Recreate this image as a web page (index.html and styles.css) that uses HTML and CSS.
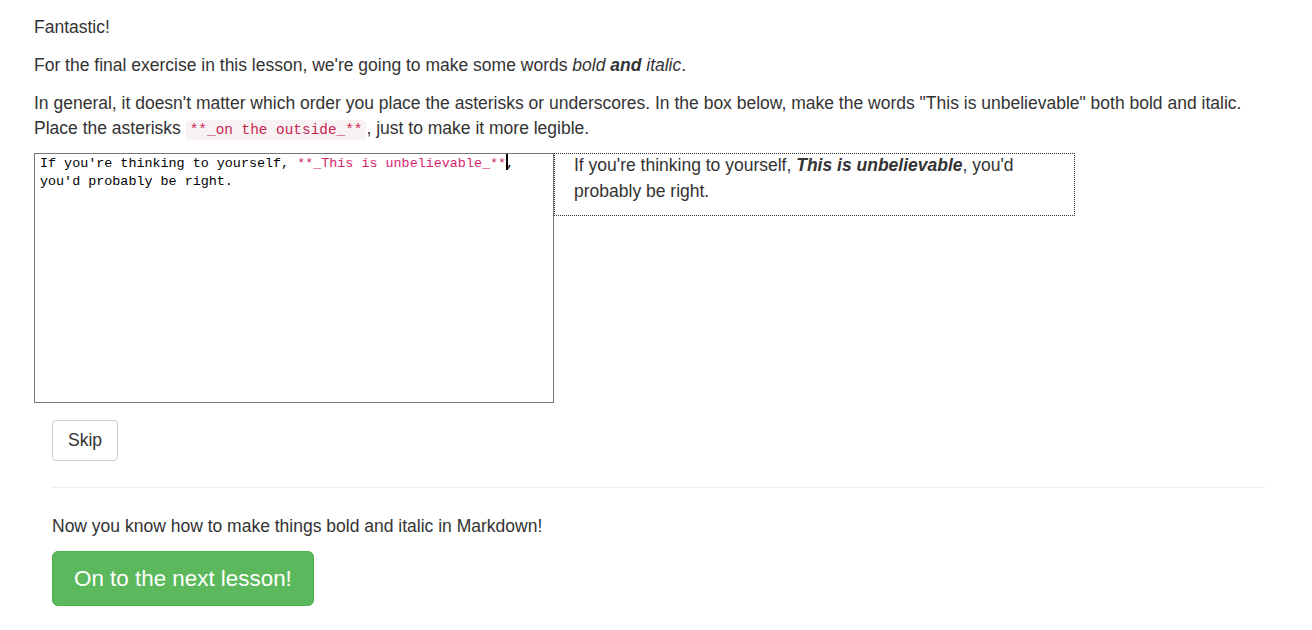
FILE: index.html
```html
<!DOCTYPE html>
<html>
<head>
<meta charset="utf-8">
<link rel="stylesheet" href="styles.css">
</head>
<body>
<main class="lesson">
  <p>Fantastic!</p>
  <p>For the final exercise in this lesson, we're going to make some words <em>bold <strong>and</strong> italic</em>.</p>
  <p class="instructions">In general, it doesn't matter which order you place the asterisks or underscores. In the box below, make the words "This is unbelievable" both bold and italic. Place the asterisks <code>**_on the outside_**</code>, just to make it more legible.</p>
  <div class="exercise">
    <div class="editor">If you're thinking to yourself, <span class="md">**_This is unbelievable_**</span><span class="caret"></span>, you'd probably be right.</div>
    <div class="preview"><p>If you're thinking to yourself, <strong><em>This is unbelievable</em></strong>, you'd probably be right.</p></div>
  </div>
  <div class="footer">
    <button class="btn btn-default">Skip</button>
    <hr class="divider">
    <p class="done">Now you know how to make things bold and italic in Markdown!</p>
    <button class="btn btn-success">On to the next lesson!</button>
  </div>
</main>
</body>
</html>
```

FILE: styles.css
```css
html, body {
  margin: 0;
  padding: 0;
  background: #fff;
}
body {
  font-family: "Liberation Sans", Arial, sans-serif;
  font-size: 17.5px;
  line-height: 25px;
  color: #333;
}
.lesson {
  padding: 15px 47px 0 34px;
}
p {
  margin: 0 0 13px;
}
.instructions {
  margin-bottom: 12px;
}
code {
  font-family: "Liberation Mono", monospace;
  font-size: 14.4px;
  line-height: 1;
  color: #c7254e;
  background: #f9f2f4;
  padding: 2px 4px;
  border-radius: 4px;
}
.exercise {
  display: flex;
  align-items: flex-start;
}
.editor {
  box-sizing: border-box;
  width: 520px;
  height: 250px;
  border: 1px solid #767676;
  padding: 0 5px;
  font-family: "Liberation Mono", monospace;
  font-size: 13.4px;
  line-height: 18px;
  color: #000;
  white-space: pre-wrap;
  word-wrap: break-word;
}
.md {
  color: #d6246e;
}
.caret {
  display: inline-block;
  width: 2px;
  height: 16px;
  background: #000;
  vertical-align: -3px;
  margin-right: -2px;
}
.preview {
  box-sizing: border-box;
  width: 521px;
  border: 1px dotted #333;
  padding: 0 20px 0 19px;
  line-height: 26px;
}
.preview p {
  margin: -2px 0 11px;
}
.footer {
  margin: 17px 0 0 18px;
}
.btn {
  display: inline-block;
  font-family: "Liberation Sans", Arial, sans-serif;
  font-size: 17.5px;
  line-height: 23px;
  padding: 8px 15px;
  border: 1px solid #ccc;
  border-radius: 4px;
  background: #fff;
  color: #333;
  cursor: pointer;
}
.divider {
  border: 0;
  border-top: 1px solid #eee;
  margin: 26px 0 26px;
}
.done {
  margin-bottom: 12px;
}
.btn-success {
  background: #5cb85c;
  border-color: #4cae4c;
  color: #fff;
  font-size: 22.4px;
  line-height: 31px;
  padding: 11px 21px;
  border-radius: 6px;
}
```
